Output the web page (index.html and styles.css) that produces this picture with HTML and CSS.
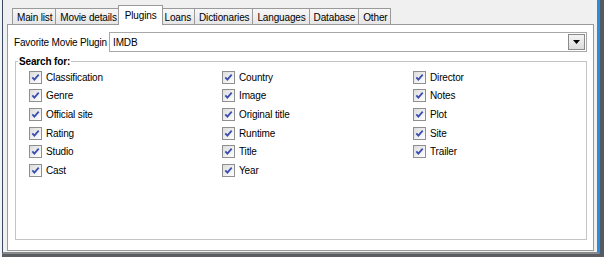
FILE: index.html
```html
<!DOCTYPE html>
<html lang="en">

<head>
    <meta charset="UTF-8">
    <title>Plugins - Options</title>
    <link rel="stylesheet" href="styles.css">
</head>

<body>

    <div class="desk">
        <div class="shadow">
            <div class="window">
                <div class="tabs">
                    <div class="tab">Main list</div>
                    <div class="tab">Movie details</div>
                    <div class="tab active">Plugins</div>
                    <div class="tab">Loans</div>
                    <div class="tab">Dictionaries</div>
                    <div class="tab">Languages</div>
                    <div class="tab">Database</div>
                    <div class="tab">Other</div>
                </div>

                <div class="panel">
                    <div class="plugin-row">
                        <label class="plugin-label">Favorite Movie Plugin</label>
                        <div class="combo">
                            <span class="combo-text">IMDB</span>
                            <span class="combo-btn">
                                <svg width="7" height="4" viewBox="0 0 7 4"><path d="M0 0 H7 L3.5 4 Z" fill="#000"/></svg>
                            </span>
                        </div>
                    </div>

                    <fieldset class="group">
                        <legend>Search for:</legend>
                        <div class="options" id="options">
                            <!-- checkboxes are inserted here -->
                        </div>
                    </fieldset>
                </div>
            </div>
        </div>
    </div>

    <script>
        // Fields listed row by row, three columns as in the dialog
        const fields = [
            'Classification', 'Country', 'Director',
            'Genre', 'Image', 'Notes',
            'Official site', 'Original title', 'Plot',
            'Rating', 'Runtime', 'Site',
            'Studio', 'Title', 'Trailer',
            'Cast', 'Year', ''
        ];

        const box = document.getElementById('options');
        const tick = '<svg width="11" height="11" viewBox="0 0 11 11"><path d="M2.3 5.3 L4.4 7.6 L8.7 2.7" fill="none" stroke="#3a4fb0" stroke-width="1.8"/></svg>';

        fields.forEach(name => {
            const item = document.createElement('div');
            item.className = 'option';
            if (name) {
                item.innerHTML = `<span class="check">${tick}</span><span>${name}</span>`;
            }
            box.appendChild(item);
        });
    </script>

</body>

</html>
```

FILE: styles.css
```css
body {
    margin: 0;
    background-color: #f4f4f4;
    font-family: 'Liberation Sans', Arial, sans-serif;
    font-size: 10px;
    letter-spacing: -0.15px;
    color: #000;
    overflow: hidden;
}

.desk {
    width: 604px;
    height: 257px;
    padding-left: 2px;
    box-sizing: border-box;
}

.shadow {
    height: 100%;
    border-right: 4px solid #555a60;
    border-bottom: 3px solid #5a5d62;
    box-sizing: border-box;
}

.window {
    height: 100%;
    box-sizing: border-box;
    background-color: #f0f0f0;
    border-left: 1px solid #3a4a64;
    border-right: 3px solid #2a8ee0;
    border-bottom: 2px solid #8a8a8a;
    padding: 5px 3px 1px 4px;
    display: flex;
    flex-direction: column;
}

.tabs {
    display: flex;
    align-items: flex-end;
    padding-left: 5px;
    height: 19px;
    position: relative;
    z-index: 1;
}

.tab {
    height: 16px;
    box-sizing: border-box;
    padding: 2px 3px 0 4px;
    border: 1px solid #9a9a9a;
    border-bottom: none;
    border-left: none;
    background: linear-gradient(#f7f7f7, #e6e6e6);
    white-space: nowrap;
    line-height: 13px;
}

    .tab:first-child {
        border-left: 1px solid #9a9a9a;
    }

    .tab.active {
        height: 20px;
        margin: 0 -2px -1px -3px;
        padding: 3px 5px 0 6px;
        background: #fff;
        border-left: 1px solid #9a9a9a;
        position: relative;
        z-index: 2;
    }

    .tab.active + .tab {
        border-left: none;
    }

.panel {
    flex: 1;
    background-color: #fff;
    border: 1px solid #9a9a9a;
    padding: 7px 6px 0 6px;
}

.plugin-row {
    display: flex;
    align-items: center;
    gap: 2px;
    height: 20px;
}

.combo {
    flex: 1;
    height: 20px;
    box-sizing: border-box;
    border: 1px solid #a8a8a8;
    display: flex;
    align-items: center;
    justify-content: space-between;
    padding: 0 1px 0 3px;
}

.combo-btn {
    width: 17px;
    height: 16px;
    box-sizing: border-box;
    border: 1px solid #8a8a8a;
    background: linear-gradient(#f4f4f4, #dcdcdc);
    display: flex;
    align-items: center;
    justify-content: center;
}

.group {
    margin: 4px 0 0 1px;
    padding: 1px 0 0 0;
    height: 184px;
    box-sizing: border-box;
    border: 1px solid #c4c4c4;
}

    .group legend {
        font-weight: bold;
        padding: 0 1px;
        margin-left: 2px;
        line-height: 11px;
    }

.options {
    display: grid;
    grid-template-columns: 193px 191px 150px;
    grid-auto-rows: 18.6px;
    padding-left: 13px;
}

.option {
    display: flex;
    align-items: center;
    gap: 4px;
}

.check {
    width: 13px;
    height: 13px;
    box-sizing: border-box;
    border: 1px solid #8e8f8f;
    background: linear-gradient(135deg, #dcdcdc, #ffffff);
    display: flex;
    align-items: center;
    justify-content: center;
}
```
